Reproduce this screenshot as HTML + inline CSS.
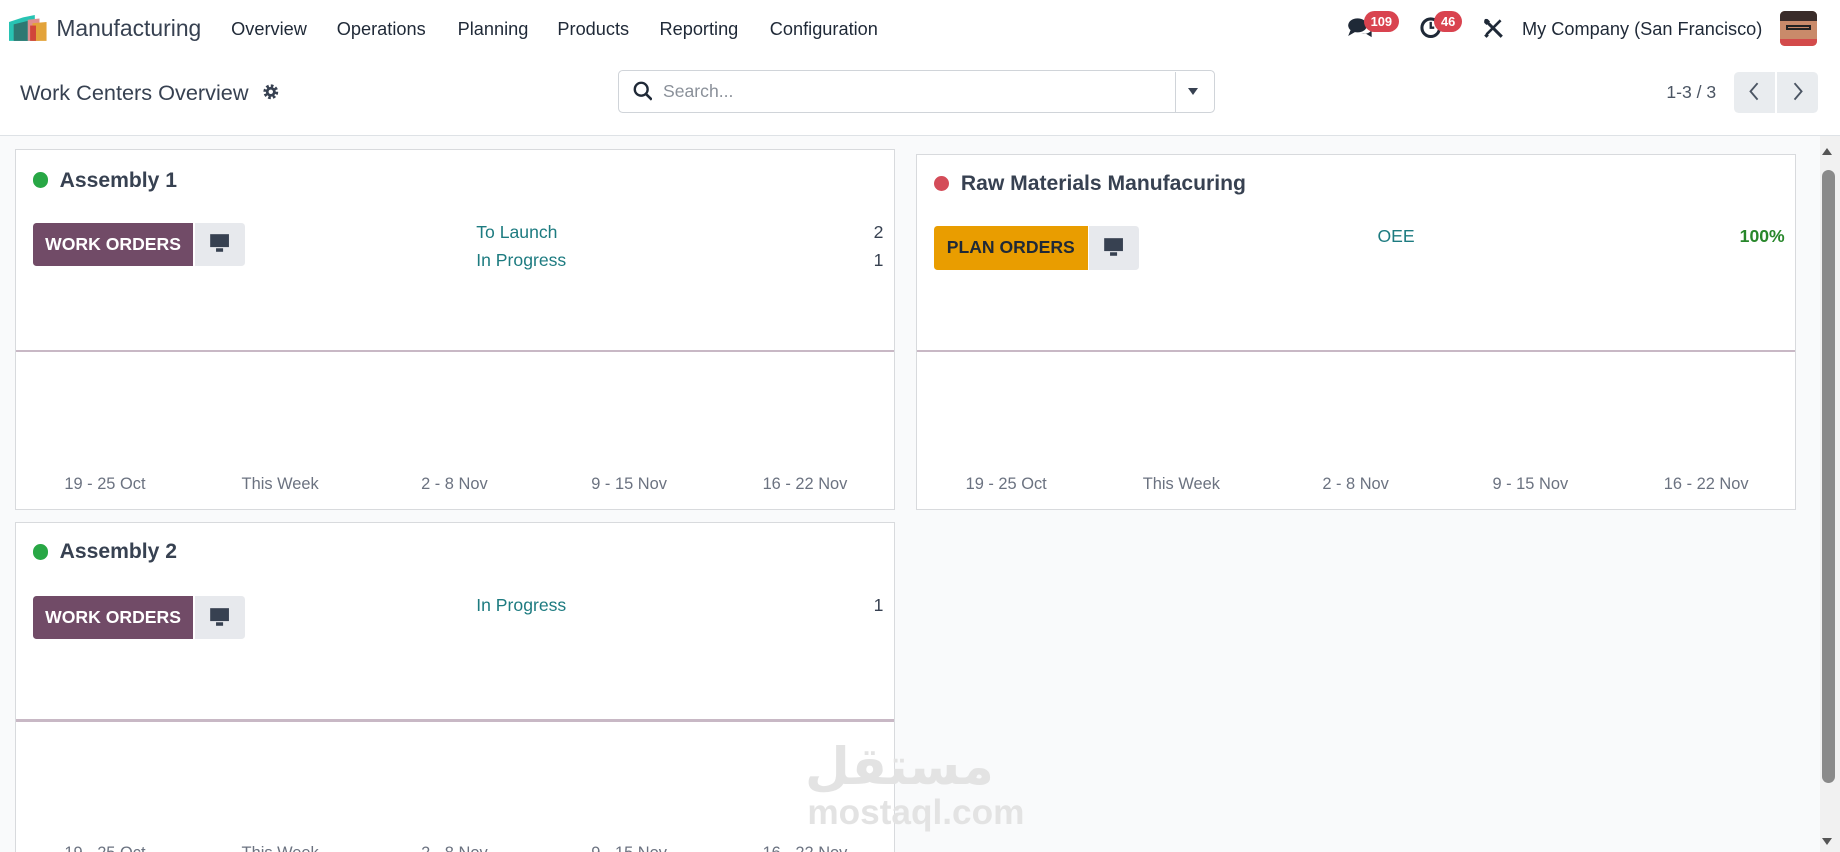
<!DOCTYPE html>
<html><head><meta charset="utf-8"><style>
html,body{margin:0;padding:0;overflow:hidden}
body{width:1568px;height:726px;zoom:1.17347;font-family:"Liberation Sans","DejaVu Sans",sans-serif;color:#374151;background:#f9fafb;position:relative}
.a{position:absolute}
.nav{left:0;top:0;width:1568px;height:46px;background:#fff}
.nav span{position:absolute;top:16px;font-size:15.5px;color:#1f2937}
.cp{left:0;top:46px;width:1568px;height:69px;background:#fff;border-bottom:1px solid #dee2e6}
.card{background:#fff;border:1px solid #d8dadd}
.dot{width:13px;height:13px;border-radius:50%}
.ttl{font-size:18px;font-weight:bold;color:#374151}
.btn{height:37px;color:#fff;font-weight:bold;font-size:15px;line-height:37px;text-align:center;border-radius:3px 0 0 3px}
.mon{width:43px;height:37px;background:#e7e9ed;border-radius:0 3px 3px 0}
.lnk{font-size:15px;color:#1d7b80}
.num{font-size:15px;color:#374151}
.gl{height:2px;background:#c8b8c5}
.lab{font-size:14px;color:#6b7280}
.badge{background:#d9434f;color:#fff;font-size:11px;font-weight:bold;border-radius:9px;height:18px;line-height:18px;padding:0 6px}
</style></head><body>
<div class="a nav">
 <svg class="a" style="left:8px;top:13px" width="32" height="22" viewBox="0 0 32 22"><path d="M0 6 L12 2 L22 0 L22 22 L0 22Z" fill="#28c3b3"/><path d="M4 8 L16 5 L16 22 L4 22Z" fill="#2e7872"/><path d="M16 4 L26 3 L26 22 L16 22Z" fill="#e08e8e"/><path d="M20 7 L32 6 L32 22 L20 22Z" fill="#e3a33a"/><rect x="18" y="9" width="5" height="13" fill="#d1453a"/></svg>
 <span style="left:48px;top:13px;font-size:19.5px;color:#374151">Manufacturing</span>
 <span style="left:197px">Overview</span><span style="left:287px">Operations</span><span style="left:390px">Planning</span><span style="left:475px">Products</span><span style="left:562px">Reporting</span><span style="left:656px">Configuration</span>
 <svg class="a" style="left:1148px;top:14px" width="22" height="20" viewBox="0 0 22 20"><ellipse cx="9" cy="8" rx="8" ry="6" fill="#1f2937"/><path d="M3 12 L1 17 L8 13Z" fill="#1f2937"/><path d="M12 15 Q18 16 21 12 L21 18 L16 15Z" fill="#1f2937"/></svg>
 <div class="a badge" style="left:1162px;top:9px">109</div>
 <svg class="a" style="left:1209px;top:14px" width="20" height="20" viewBox="0 0 20 20"><circle cx="10" cy="10" r="7.5" fill="none" stroke="#1f2937" stroke-width="2.6"/><path d="M10 5 V10 H13" stroke="#1f2937" stroke-width="2" fill="none"/></svg>
 <div class="a badge" style="left:1222px;top:9px">46</div>
 <svg class="a" style="left:1264px;top:15px" width="18" height="18" viewBox="0 0 18 18"><path d="M4 4 L16 16" stroke="#1f2937" stroke-width="2.6"/><path d="M15 2 L3 14" stroke="#1f2937" stroke-width="2.2"/><path d="M1 15 L3 17 L5 15 L3 13Z" fill="#1f2937"/><path d="M1 3 Q1 0 4 1 L6 3 L3 6 L1 4Z" fill="#1f2937"/></svg>
 <span style="left:1297px">My Company (San Francisco)</span>
 <div class="a" style="left:1517px;top:9px;width:31px;height:30px;border-radius:4px;background:#c98a6a;overflow:hidden"><div class="a" style="left:0;top:0;width:31px;height:9px;background:#3a2c2a"></div><div class="a" style="left:5px;top:12px;width:21px;height:5px;border:2px solid #222;box-sizing:border-box"></div><div class="a" style="left:0;top:24px;width:31px;height:6px;background:#d34b4b"></div></div>
</div>
<div class="a cp">
 <div class="a" style="left:17px;top:22px;font-size:18.5px;color:#374151">Work Centers Overview</div>
 <svg class="a" style="left:223px;top:25px" width="15" height="15" viewBox="0 0 16 16"><circle cx="8" cy="8" r="5" fill="none" stroke="#374151" stroke-width="3.5" stroke-dasharray="2.2 1.7"/><circle cx="8" cy="8" r="4.5" fill="#374151"/><circle cx="8" cy="8" r="2" fill="#fff"/></svg>
 <div class="a" style="left:527px;top:14px;width:507px;height:35px;border:1px solid #d0d4d9;border-radius:4px;background:#fff"></div>
 <div class="a" style="left:1001px;top:15px;width:1px;height:35px;background:#d0d4d9"></div>
 <svg class="a" style="left:539px;top:23px" width="17" height="17" viewBox="0 0 17 17"><circle cx="7" cy="7" r="5.5" fill="none" stroke="#1f2937" stroke-width="2"/><path d="M11 11 L16 16" stroke="#1f2937" stroke-width="2.2"/></svg>
 <div class="a" style="left:565px;top:23px;font-size:15px;color:#8a9099">Search...</div>
 <div class="a" style="left:1012px;top:29px;border-left:5px solid transparent;border-right:5px solid transparent;border-top:6px solid #374151"></div>
 <div class="a" style="left:1420px;top:24px;font-size:15px;color:#4b5563">1-3 / 3</div>
 <div class="a" style="left:1478px;top:15px;width:35px;height:35px;background:#e9ecef;border-radius:4px 0 0 4px"></div>
 <div class="a" style="left:1514px;top:15px;width:35px;height:35px;background:#e9ecef;border-radius:0 4px 4px 0"></div>
 <svg class="a" style="left:1489px;top:24px" width="12" height="16"><path d="M9 1 L3 8 L9 15" stroke="#4b5563" stroke-width="1.6" fill="none"/></svg>
 <svg class="a" style="left:1526px;top:24px" width="12" height="16"><path d="M3 1 L9 8 L3 15" stroke="#4b5563" stroke-width="1.6" fill="none"/></svg>
</div>

<div class="a card" style="left:13px;top:127px;width:748px;height:306px">
 <div class="a dot" style="left:14px;top:19px;background:#28a745"></div>
 <div class="a ttl" style="left:37px;top:16px">Assembly 1</div>
 <div class="a btn" style="left:14px;top:62px;width:137px;background:#714b67">WORK ORDERS</div>
 <div class="a mon" style="left:152px;top:62px"></div>
 <svg class="a" style="left:164px;top:71px" width="18" height="17"><rect x="1" y="1" width="16" height="11" fill="#374151"/><rect x="6" y="13" width="6" height="3" fill="#374151"/></svg>
 <div class="a lnk" style="left:392px;top:61px">To Launch</div><div class="a num" style="right:9px;top:61px">2</div>
 <div class="a lnk" style="left:392px;top:85px">In Progress</div><div class="a num" style="right:9px;top:85px">1</div>
 <div class="a gl" style="left:0;top:170px;width:748px"></div>
 <div class="a lab" style="left:41px;top:277px">19 - 25 Oct</div><div class="a lab" style="left:192px;top:277px">This Week</div><div class="a lab" style="left:345px;top:277px">2 - 8 Nov</div><div class="a lab" style="left:490px;top:277px">9 - 15 Nov</div><div class="a lab" style="left:636px;top:277px">16 - 22 Nov</div>
</div>

<div class="a card" style="left:781px;top:131px;width:748px;height:302px">
 <div class="a dot" style="left:14px;top:18px;background:#d44c59"></div>
 <div class="a ttl" style="left:37px;top:15px">Raw Materials Manufacuring</div>
 <div class="a btn" style="left:14px;top:61px;width:131px;background:#e99d00;color:#1f2937">PLAN ORDERS</div>
 <div class="a mon" style="left:146px;top:61px"></div>
 <svg class="a" style="left:158px;top:70px" width="18" height="17"><rect x="1" y="1" width="16" height="11" fill="#374151"/><rect x="6" y="13" width="6" height="3" fill="#374151"/></svg>
 <div class="a lnk" style="left:392px;top:61px">OEE</div><div class="a" style="right:9px;top:61px;font-size:15px;font-weight:bold;color:#28872b">100%</div>
 <div class="a gl" style="left:0;top:166px;width:748px"></div>
 <div class="a lab" style="left:41px;top:273px">19 - 25 Oct</div><div class="a lab" style="left:192px;top:273px">This Week</div><div class="a lab" style="left:345px;top:273px">2 - 8 Nov</div><div class="a lab" style="left:490px;top:273px">9 - 15 Nov</div><div class="a lab" style="left:636px;top:273px">16 - 22 Nov</div>
</div>

<div class="a card" style="left:13px;top:445px;width:748px;height:306px;overflow:hidden">
 <div class="a dot" style="left:14px;top:18px;background:#28a745"></div>
 <div class="a ttl" style="left:37px;top:14px">Assembly 2</div>
 <div class="a btn" style="left:14px;top:62px;width:137px;background:#714b67">WORK ORDERS</div>
 <div class="a mon" style="left:152px;top:62px"></div>
 <svg class="a" style="left:164px;top:71px" width="18" height="17"><rect x="1" y="1" width="16" height="11" fill="#374151"/><rect x="6" y="13" width="6" height="3" fill="#374151"/></svg>
 <div class="a lnk" style="left:392px;top:61px">In Progress</div><div class="a num" style="right:9px;top:61px">1</div>
 <div class="a gl" style="left:0;top:167px;width:748px"></div>
 <div class="a lab" style="left:41px;top:273px">19 - 25 Oct</div><div class="a lab" style="left:192px;top:273px">This Week</div><div class="a lab" style="left:345px;top:273px">2 - 8 Nov</div><div class="a lab" style="left:490px;top:273px">9 - 15 Nov</div><div class="a lab" style="left:636px;top:273px">16 - 22 Nov</div>
</div>

<div class="a" style="left:686px;top:628px;font-size:44px;font-weight:bold;color:#e3e3e3;font-family:'DejaVu Sans',sans-serif">مستقل</div>
<div class="a" style="left:688px;top:676px;font-size:30px;font-weight:bold;color:#e3e3e3">mostaql.com</div>

<div class="a" style="left:1551px;top:116px;width:17px;height:610px;background:#f1f1f1"></div>
<div class="a" style="left:1553px;top:145px;width:11px;height:522px;background:#8a8a8a;border-radius:6px"></div>
<div class="a" style="left:1553px;top:126px;border-left:5px solid transparent;border-right:5px solid transparent;border-bottom:6px solid #555"></div>
<div class="a" style="left:1553px;top:714px;border-left:5px solid transparent;border-right:5px solid transparent;border-top:6px solid #555"></div>
</body></html>
